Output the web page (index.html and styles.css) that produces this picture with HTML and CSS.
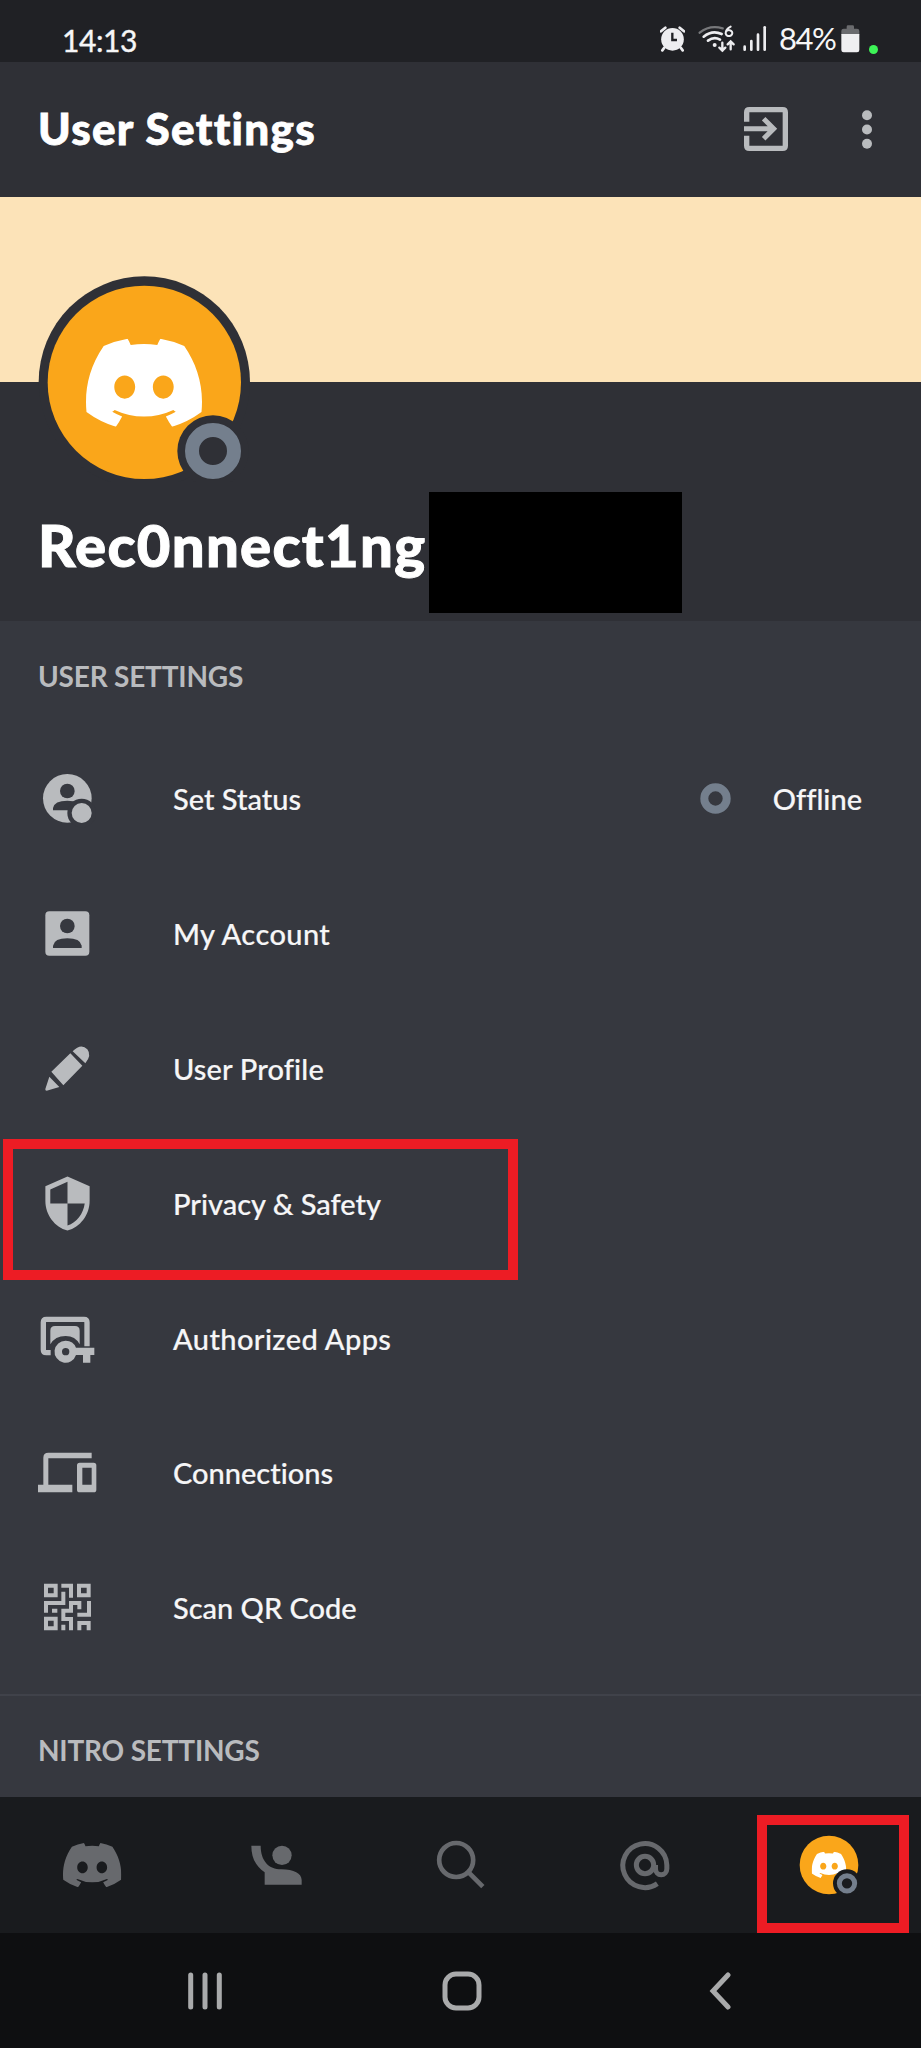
FILE: index.html
```html
<!DOCTYPE html>
<html lang="en">
<head>
<meta charset="utf-8">
<title>User Settings</title>
<link rel="stylesheet" href="styles.css">
</head>
<body>
<svg class="defs" width="0" height="0">
  <symbol id="clyde" viewBox="0 0 127.14 96.36"><path d="M107.7,8.07A105.15,105.15,0,0,0,81.47,0a72.06,72.06,0,0,0-3.36,6.83A97.68,97.68,0,0,0,49,6.83,72.37,72.37,0,0,0,45.64,0,105.89,105.89,0,0,0,19.39,8.09C2.79,32.65-1.71,56.6.54,80.21h0A105.73,105.73,0,0,0,32.71,96.36,77.7,77.7,0,0,0,39.6,85.25a68.42,68.42,0,0,1-10.85-5.18c.91-.66,1.8-1.34,2.66-2a75.57,75.57,0,0,0,64.32,0c.87.71,1.76,1.39,2.66,2a68.68,68.68,0,0,1-10.87,5.19,77,77,0,0,0,6.89,11.1A105.25,105.25,0,0,0,126.6,80.22h0C129.24,52.84,122.09,29.11,107.7,8.07ZM42.45,65.69C36.18,65.69,31,60,31,53s5-12.74,11.43-12.74S54,46,53.89,53,48.84,65.69,42.45,65.69Zm42.24,0C78.41,65.69,73.25,60,73.25,53s5-12.74,11.44-12.74S96.23,46,96.12,53,91.08,65.69,84.69,65.69Z"/></symbol>
</svg>
<div class="phone">
  <header class="status">
    <span class="time">14:13</span>
    <div class="status-icons">
      <svg class="alarm" width="25" height="26" viewBox="117 77 75 78"><g fill="#ededf0"><circle cx="154.500" cy="117" r="34"/></g><path d="M120 93L133 82M189 93L176 82M130 142l-6 8M179 142l6 8" stroke="#ededf0" stroke-width="8" stroke-linecap="round"/><path d="M154 97v22h14" fill="none" stroke="#202125" stroke-width="7"/></svg>
      <svg class="wifi" width="38" height="28" viewBox="232 74 114 84" fill="none" stroke-linecap="round"><path d="M237 97Q267 73 306 84" stroke="#77787b" stroke-width="7"/><path d="M249 109Q275 88 303 101M262 121Q280 108 298 118" stroke="#ededf0" stroke-width="8"/><circle cx="282" cy="134" r="6" fill="#ededf0"/><path d="M305 127v24m-9-9 9 9 9-9M330 147v-24m-9 9 9-9 9 9" stroke="#ededf0" stroke-width="7"/><path d="M330 79q-15 8-15 20a10 9 0 1 0 4-8" stroke="#ededf0" stroke-width="6"/></svg>
      <svg class="signal" width="24" height="26" viewBox="368 76 72 78" stroke="#ededf0" stroke-width="8" stroke-linecap="round"><path d="M373 138v9M393 121v26M413 102v45"/><path d="M433 80v67"/></svg>
      <span class="pct">84%</span>
      <svg class="battery" width="19" height="28" viewBox="664 74 57 84"><path d="M665 103V92q0-7 7-7h9v-6q0-4 4-4h14q4 0 4 4v6h9q7 0 7 7v11z" fill="#6a6b6e"/><path d="M665 101h54v48q0 7-7 7h-40q-7 0-7-7z" fill="#efeff1"/></svg>
      <i class="dot"></i>
    </div>
  </header>
  <div class="appbar">
    <h1>User Settings</h1>
    <svg class="exit" width="44" height="44" viewBox="374 321 132 132" fill="none" stroke="#b9bbbe"><path d="M382 365V337q0-8 8-8h100q8 0 8 8v100q0 8-8 8H390q-8 0-8-8v-30" stroke-width="16"/><path d="M374 386h90M433 356l30 30-30 30" stroke-width="15"/></svg>
    <svg class="more" width="10" height="39" viewBox="729 331 30 116" fill="#b9bbbe"><circle cx="744" cy="346" r="15"/><circle cx="744" cy="389" r="15"/><circle cx="744" cy="432" r="15"/></svg>
  </div>
  <section class="profile">
    <div class="banner"></div>
    <svg class="avatar" width="216" height="206" viewBox="48 48 648 618"><circle cx="373" cy="366" r="317" fill="#2f3036"/><circle cx="373" cy="367" r="290" fill="#faa61a"/><use href="#clyde" x="198" y="236" width="348" height="264" fill="#fff"/><circle cx="579" cy="573" r="107" fill="#2f3036"/><circle cx="579" cy="573" r="63" fill="none" stroke="#747f8d" stroke-width="42"/></svg>
    <div class="identity"><span class="name">Rec0nnect1ng</span><span class="redaction"></span></div>
  </section>
  <main class="settings">
    <h2>USER SETTINGS</h2>
    <ul class="list">
      <li class="row">
        <svg class="icon" viewBox="114 88 177 177"><circle cx="202" cy="176" r="73"/><g class="cut"><circle cx="202" cy="154" r="22"/><path d="M159 212v-7q4-22 43-22t43 22v7z"/><circle cx="245" cy="220" r="43"/></g><circle cx="245" cy="220" r="30"/></svg>
        <span class="label l-status">Set Status</span>
        <svg class="ring" width="31" height="31" viewBox="0 0 31 31"><circle cx="15.500" cy="15.500" r="11.200" fill="none" stroke="#747f8d" stroke-width="8"/></svg>
        <span class="label value">Offline</span>
      </li>
      <li class="row">
        <svg class="icon" viewBox="114 492 177 177"><rect x="136" y="514" width="132" height="133" rx="12"/><g class="cut"><circle cx="202" cy="558" r="22"/><path d="M159 624v-7q4-22 43-22t43 22v7z"/></g></svg>
        <span class="label l-account">My Account</span>
      </li>
      <li class="row">
        <svg class="icon" viewBox="114 897 177 177"><path d="M148 1010l30 31-38 11q-5 0-4-5zM154 995l57-55 36 37-57 59zM218 934q25-26 44-6 14 18-6 42z"/></svg>
        <span class="label l-profile">User Profile</span>
      </li>
      <li class="row">
        <svg class="icon" viewBox="0 0 24 24"><path d="M12 1L3 5v6c0 5.550 3.840 10.740 9 12 5.160-1.260 9-6.450 9-12V5l-9-4zm0 10.990h7c-.53 4.120-3.280 7.790-7 8.940V12H5V6.300l7-3.110v8.800z"/></svg>
        <span class="label l-privacy">Privacy &amp; Safety</span>
        <span class="mark mark-row"></span>
      </li>
      <li class="row">
        <svg class="icon" viewBox="54 56 177 177"><path d="M92 187H79q-9 0-9-9V96q0-9 9-9h113q9 0 9 9v72" fill="none" stroke="#b9bbbe" stroke-width="16"/><path d="M91 162v-41q0-14 14-14h60q14 0 14 14v41q-13-25-42-25-32 0-46 25z"/><path d="M137 151a33 33 0 1 0 31 43h21v23h22v-23h12v-22h-55a33 33 0 0 0-31-21zm0 22a11 11 0 1 1 0 22 11 11 0 0 1 0-22z"/></svg>
        <span class="label l-apps">Authorized Apps</span>
      </li>
      <li class="row">
        <svg class="icon" viewBox="54 460 177 177"><path d="M54 585h16v-81q0-15 15-15h130v17H85v79h72v23H54zM179 519h42q8 0 8 8v73q0 8-8 8h-42q-8 0-8-8v-73q0-8 8-8zm8 15v51h28v-51z" fill-rule="evenodd"/></svg>
        <span class="label l-conn">Connections</span>
      </li>
      <li class="row">
        <svg class="icon" viewBox="0 1 177 177"><path fill="none" stroke="#b9bbbe" stroke-width="12" d="M24 24h29v29H24zM123 24h29v29h-29zM24 123h29v29H24zM70 24h29v36M76 42v34H24v29M42 99h16M153 70v41h-35M124 95V76H99v23H76v25h23v34M76 158v-17M124 158v-22h28v22"/></svg>
        <span class="label l-qr">Scan QR Code</span>
      </li>
    </ul>
    <h2 class="nitro">NITRO SETTINGS</h2>
  </main>
  <nav class="tabs">
    <div class="tab"><svg width="60" height="60" viewBox="186 496 180 180" fill="#67696d"><use href="#clyde" x="189" y="520" width="175" height="133"/></svg></div>
    <div class="tab"><svg width="60" height="60" viewBox="739 496 180 180" fill="#67696d"><circle cx="847" cy="557" r="29"/><path d="M755 528h28c0 45 24 71 62 71 38 0 61 13 61 32v14H795v-37c-25-17-40-42-40-80z"/></svg></div>
    <div class="tab"><svg width="60" height="60" viewBox="1291.500 496 180 180" fill="none" stroke="#67696d" stroke-width="14"><circle cx="1367" cy="571" r="51"/><path d="M1402 606l45 45"/></svg></div>
    <div class="tab"><svg width="60" height="60" viewBox="464 496 180 180" fill="none" stroke="#67696d" stroke-width="15"><path d="M591 642A66 66 0 1 1 619.500 586v11a17 18 0 0 1-34 0v-11"/><circle cx="554" cy="586" r="26"/></svg></div>
    <div class="tab"><svg width="60" height="60" viewBox="1017 496 180 180"><circle cx="1107" cy="586" r="88" fill="#faa61a"/><use href="#clyde" x="1055" y="546" width="104" height="79" fill="#fff"/><circle cx="1161" cy="641" r="42" fill="#191b1e"/><circle cx="1161" cy="641" r="23" fill="none" stroke="#747f8d" stroke-width="15"/></svg><span class="mark mark-tab"></span></div>
  </nav>
  <footer class="sysnav">
    <svg width="34" height="44" viewBox="0 -3 34 44" stroke="#a9aaab" stroke-width="5" stroke-linecap="round"><path d="M2.700 3v32M17 3v32M31.300 3v32"/></svg>
    <svg class="home" width="40" height="40" viewBox="0 0 40 40" fill="none" stroke="#a9aaab" stroke-width="5"><rect x="3" y="3" width="34" height="34" rx="11"/></svg>
    <svg class="back" width="22" height="38" viewBox="0 0 22 38" fill="none" stroke="#a9aaab" stroke-width="5" stroke-linecap="round"><path d="M19 3L4 19l15 16"/></svg>
  </footer>
</div>
</body>
</html>
```
FILE: styles.css
```css
* { box-sizing: border-box; }
body {
  margin: 0;
  background: #36383f;
  color: #f6f6f7;
  font-family: Lato, "Open Sans", sans-serif;
  font-variant-ligatures: none;
}
.defs { position: absolute; }
svg { display: block; flex: none; }
h1, h2, ul { margin: 0; padding: 0; list-style: none; }
.phone { width: 921px; height: 2048px; display: flex; flex-direction: column; overflow: hidden; }
.phone > * { flex: none; }

.status {
  height: 62px;
  background: #202125;
  display: flex;
  justify-content: space-between;
  align-items: flex-start;
  padding: 24px 43px 0 62px;
  line-height: 32px;
}
.time { font-size: 30px; letter-spacing: -0.400px; -webkit-text-stroke: 0.400px; }
.status-icons { display: flex; align-items: flex-start; }
.alarm { margin-top: 2px; }
.wifi { margin: 1px 0 0 13px; }
.signal { margin: 2px 0 0 7px; }
.pct { width: 62px; margin-left: 12px; margin-top: -2px; font-size: 31px; letter-spacing: -1.500px; white-space: nowrap; }
.battery { margin-top: 1px; }
.dot { width: 9px; height: 9px; margin: 21px 0 0 9px; border-radius: 50%; background: #3df457; }

.appbar {
  height: 135px;
  background: #2f3036;
  display: flex;
  align-items: center;
  padding: 0 49px 0 38px;
}
h1 { flex: 1; font-size: 44px; font-weight: 900; color: #fff; letter-spacing: 1.300px; -webkit-text-stroke: 0.800px #fff; padding-bottom: 3px; }
.exit { margin-top: -1px; }
.more { margin: -1px 0 0 74px; }

.profile { position: relative; height: 424px; background: #2f3036; }
.banner { height: 185px; background: #fce3b8; }
.avatar { position: absolute; left: 36px; top: 79px; }
.identity { display: flex; align-items: center; height: 121px; margin-top: 110px; padding-left: 38px; }
.name { width: 391px; font-size: 58px; font-weight: 900; color: #fff; letter-spacing: 1.300px; -webkit-text-stroke: 1px #fff; white-space: nowrap; line-height: 70px; padding-bottom: 15px; }
.redaction { width: 253px; height: 121px; background: #000; }

.settings { height: 1176px; background: #36383f; }
h2 {
  height: 110.600px;
  padding-left: 38px;
  font-size: 28px;
  line-height: 110px;
  font-weight: 700;
  letter-spacing: -0.200px;
  color: #b9bbbe;
}
.list { height: 964px; border-bottom: 2px solid #40424a; }
.row { position: relative; height: 134.800px; display: flex; align-items: center; padding: 0 59px 0 38px; }
.icon { width: 59px; height: 59px; fill: #b9bbbe; overflow: visible; }
.cut { fill: #36383f; }
.label { margin-left: 76px; font-size: 29px; line-height: 36px; white-space: nowrap; font-weight: 500; -webkit-text-stroke: 0.200px; padding-top: 1px; }
.l-account, .l-apps { letter-spacing: 0.400px; }
.l-profile { letter-spacing: 0.150px; }
.ring { margin-left: auto; margin-top: -1px; }
.value { margin-left: 42px; }
.nitro { line-height: 109px; }
.mark { position: absolute; border: 10px solid #ed1c24; }
.mark-row { left: 3px; top: 3px; width: 515px; height: 141px; }

.tabs { height: 136px; background: #191b1e; display: flex; }
.tab { position: relative; flex: 1; display: flex; align-items: center; justify-content: center; }
.mark-tab { left: 20px; top: 18px; width: 152px; height: 118px; }

.sysnav {
  height: 115px;
  background: #0e0f11;
  display: flex;
  align-items: center;
  padding-left: 188px;
}
.home { margin-left: 220px; }
.back { margin-left: 227px; }
```
